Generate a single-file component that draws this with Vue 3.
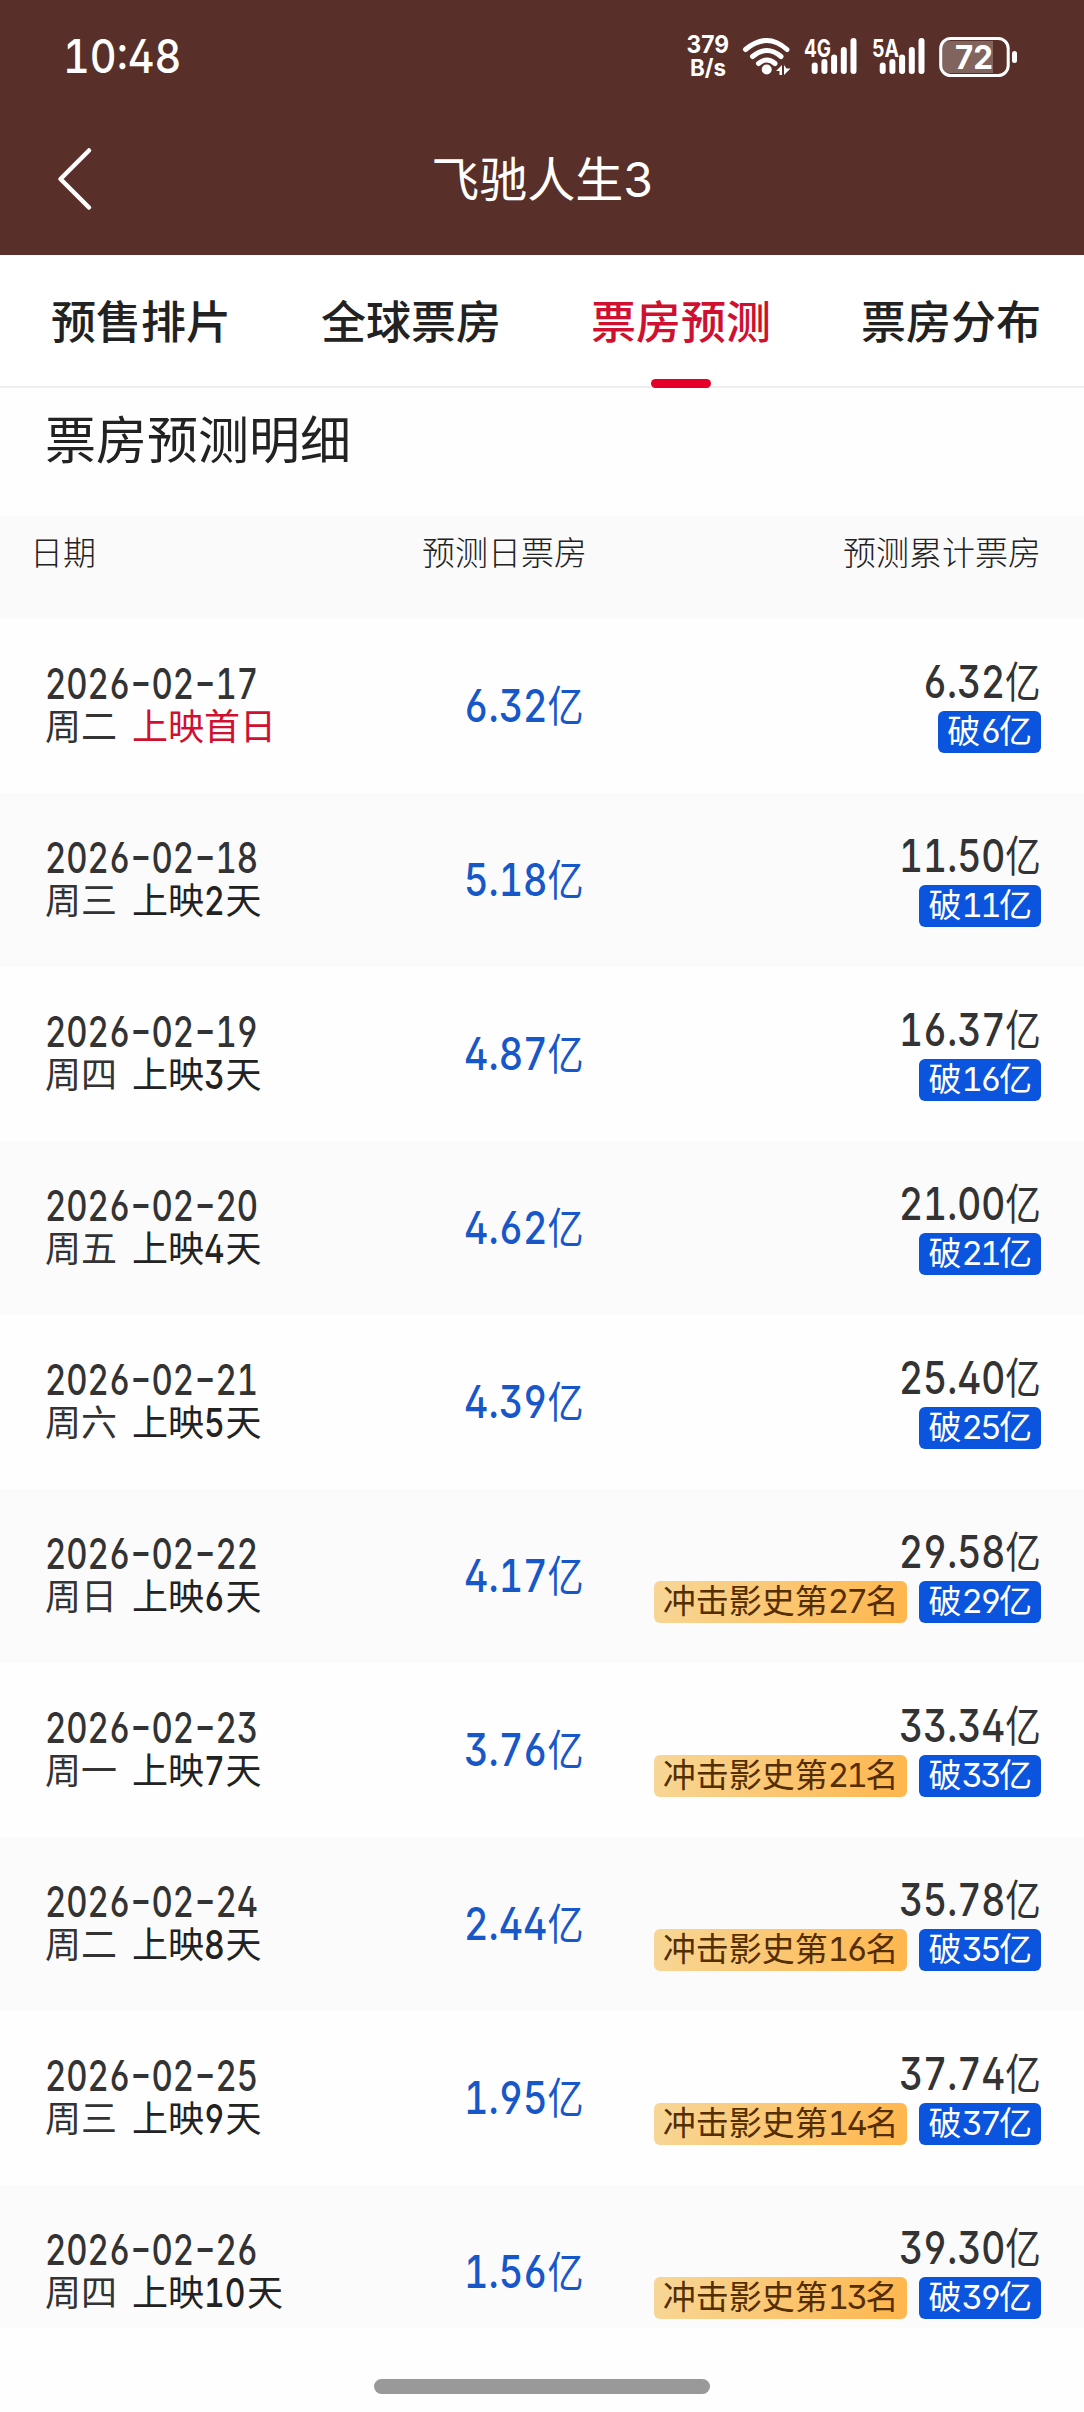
<template>
  <div class="page">
    <header class="top">
      <div class="status">
        <span class="time">10:48</span>
        <svg class="status-icons" width="340" height="50" viewBox="0 0 340 50">
          <g class="status-text">
            <text x="6.500" y="23" font-size="24.500" textLength="42.500" lengthAdjust="spacingAndGlyphs">379</text>
            <text x="10" y="45.500" font-size="23" textLength="36" lengthAdjust="spacingAndGlyphs">B/s</text>
            <text x="124" y="26.5" font-size="24" textLength="27" lengthAdjust="spacingAndGlyphs">4G</text>
            <text x="192" y="26.5" font-size="24" textLength="27" lengthAdjust="spacingAndGlyphs">5A</text>
          </g>
          <!-- wifi -->
          <g fill="none" stroke="#fff" stroke-width="5" stroke-linecap="round">
            <path d="M65.500 19.500Q87 1.500 107 19.500" />
            <path d="M72.500 26.500Q87 14.500 101 26.500" />
            <path d="M78.500 33.500Q87 26.500 95 33.500" />
          </g>
          <circle cx="86.700" cy="39.500" r="5" fill="#fff" />
          <path d="M96 41l6-6v10h-2.500v-4zM104 35v10l6.500-6.500h-4z" fill="#fff" />
          <g stroke="#fff" stroke-width="6" stroke-linecap="round">
            <path
              v-for="(bar, i) in signalBars"
              :key="i"
              :d="`M${bar.x} ${bar.y}V41M${bar.x + 68} ${bar.y}V41`"
            />
          </g>
          <!-- battery -->
          <path d="M313 11V43H270Q262 43 262 35V19Q262 11 270 11Z" fill="#82645f" />
          <rect x="260.700" y="8.500" width="67.500" height="37" rx="10" fill="none" stroke="#fff" stroke-width="3" />
          <rect x="332" y="21" width="5" height="12" rx="2.500" fill="#fff" />
          <text class="battery" x="275" y="39" textLength="38" lengthAdjust="spacingAndGlyphs">72</text>
        </svg>
      </div>
      <div class="nav">
        <svg class="back" width="40" height="66" viewBox="0 0 40 66">
          <path d="M34 4.500L5.500 33L34 61.500" fill="none" stroke="#fff" stroke-width="4.500" stroke-linecap="round" stroke-linejoin="round" />
        </svg>
        <h1>飞驰人生3</h1>
      </div>
    </header>

    <nav class="tabs">
      <div
        v-for="tab in tabs"
        :key="tab"
        class="tab"
        :class="{ active: tab === activeTab }"
        @click="activeTab = tab"
      >
        {{ tab }}
      </div>
    </nav>

    <main class="content">
      <h2>票房预测明细</h2>
      <div class="grid head">
        <span>日期</span>
        <span class="head-daily">预测日票房</span>
        <span class="head-total">预测累计票房</span>
      </div>
      <div v-for="(row, index) in rows" :key="row.date" class="grid row">
        <div class="day">
          <div class="date">
            <span v-for="(char, i) in row.date" :key="i" :class="{ dash: char === '-' }">{{ char }}</span>
          </div>
          <div class="week">
            <span>{{ row.week }}</span>
            <span v-if="index === 0" class="first">上映首日</span>
            <span v-else class="nth"
              >上映<span class="nth-num" :style="{ width: dayWidth(index + 1) }"><b>{{ index + 1 }}</b></span>天</span
            >
          </div>
        </div>
        <div class="daily">
          <div class="amount">{{ row.daily }}<i>亿</i></div>
        </div>
        <div class="total">
          <div class="amount">{{ row.total }}<i>亿</i></div>
          <div class="badges">
            <span v-if="row.rank" class="badge rank">冲击影史第<em>{{ row.rank }}</em>名</span>
            <span class="badge pass">破<em>{{ parseInt(row.total) }}</em>亿</span>
          </div>
        </div>
      </div>
    </main>

    <div class="home"><span></span></div>
  </div>
</template>

<script setup>
import { ref } from "vue";

const tabs = ["预售排片", "全球票房", "票房预测", "票房分布"];
const activeTab = ref("票房预测");

const signalBars = [
  { x: 134.7, y: 35.5 },
  { x: 144.4, y: 32 },
  { x: 154.1, y: 27.5 },
  { x: 163.8, y: 20 },
  { x: 173.5, y: 11 },
];

const rows = [
  { date: "2026-02-17", week: "周二", daily: "6.32", total: "6.32" },
  { date: "2026-02-18", week: "周三", daily: "5.18", total: "11.50" },
  { date: "2026-02-19", week: "周四", daily: "4.87", total: "16.37" },
  { date: "2026-02-20", week: "周五", daily: "4.62", total: "21.00" },
  { date: "2026-02-21", week: "周六", daily: "4.39", total: "25.40" },
  { date: "2026-02-22", week: "周日", daily: "4.17", total: "29.58", rank: 27 },
  { date: "2026-02-23", week: "周一", daily: "3.76", total: "33.34", rank: 21 },
  { date: "2026-02-24", week: "周二", daily: "2.44", total: "35.78", rank: 16 },
  { date: "2026-02-25", week: "周三", daily: "1.95", total: "37.74", rank: 14 },
  { date: "2026-02-26", week: "周四", daily: "1.56", total: "39.30", rank: 13 },
];

// condensed digits take 21.5px each
const dayWidth = (day) => `${String(day).length * 21.5}px`;
</script>

<style>
body {
  background: #fff;
}
</style>

<style scoped>
.page {
  width: 1084px;
  height: 2412px;
  display: flex;
  flex-direction: column;
  overflow: hidden;
  background: #fefefe;
  color: #333;
  font-family: Inter, "Noto Sans CJK SC", sans-serif;
}

.top {
  height: 255px;
  flex: none;
  background: #582f29;
  color: #fff;
}

.status {
  height: 112px;
  display: flex;
  justify-content: space-between;
  box-sizing: border-box;
  padding: 30px 64px 0 63px;
}

.time {
  font-size: 46px;
  font-weight: 500;
  line-height: 52px;
  transform: scaleX(0.9);
  transform-origin: left;
  font-feature-settings: "tnum", "cv02";
}

.status-text,
.battery {
  fill: #fff;
  font-weight: 700;
}

.battery {
  font-size: 33px;
}

.nav {
  display: grid;
  grid-template-columns: 95px 1fr 95px;
  align-items: center;
  height: 134px;
}

.back {
  margin-left: 55px;
}

h1 {
  margin: 0;
  padding-top: 2px;
  text-align: center;
  font-size: 48px;
  font-weight: 400;
  line-height: 60px;
}

.tabs {
  display: flex;
  flex: none;
  height: 133px;
  box-sizing: border-box;
  padding-left: 6px;
  border-bottom: 2px solid #eee;
  background: #fff;
}

.tab {
  width: 270px;
  flex: none;
  display: flex;
  flex-direction: column;
  align-items: center;
  padding-top: 35px;
  box-sizing: border-box;
  height: 133px;
  color: #222;
  font-size: 45px;
  font-weight: 500;
  line-height: 66px;
}

.tab.active {
  color: #d01030;
}

.tab.active::after {
  content: "";
  width: 60px;
  height: 9px;
  margin-top: 23px;
  border-radius: 4.5px;
  background: #e60029;
}

.content {
  height: 1940px;
  flex: none;
  overflow: hidden;
}

h2 {
  margin: 0;
  height: 128px;
  padding: 18px 0 0 45px;
  box-sizing: border-box;
  color: #222;
  font-size: 51px;
  font-weight: 400;
  line-height: 70px;
}

.grid {
  display: grid;
  grid-template-columns: 415px 175px 1fr;
}

.head {
  height: 103px;
  padding: 13px 43px 0 30px;
  box-sizing: border-box;
  background: #fafafa;
  color: #222;
  font-size: 33px;
  font-weight: 300;
  line-height: 48px;
}

.head-daily {
  margin-left: -23px;
  white-space: nowrap;
}

.head-total {
  text-align: right;
}

.row {
  height: 174px;
  padding: 0 43px 0 45px;
  box-sizing: border-box;
}

.row:nth-child(even) {
  background: #fbfbfb;
}

.day {
  padding-top: 40px;
}

.date,
.amount,
.nth-num,
.badge em {
  font-feature-settings: "tnum", "cv02", "cv03", "cv04", "cv09", "case";
}

.date {
  display: flex;
  font-size: 42px;
  font-weight: 450;
  line-height: 50px;
  transform: scaleX(0.783);
  transform-origin: left;
}

.dash {
  transform: scaleX(1.4);
}

.week {
  display: flex;
  gap: 15px;
  font-size: 36px;
  line-height: 36px;
  white-space: nowrap;
}

.first {
  color: #d01030;
}

.nth {
  display: flex;
  color: #222;
}

.nth-num b {
  display: block;
  font-size: 40px;
  font-weight: 500;
  transform: scaleX(0.8);
  transform-origin: left;
}

.amount {
  font-size: 45px;
  font-weight: 450;
  line-height: 50px;
  white-space: nowrap;
  transform: scaleX(0.825);
  transform-origin: right;
}

.amount i {
  font-style: normal;
  font-size: 43px;
  font-weight: 400;
}

.daily {
  display: flex;
  justify-content: flex-end;
  padding: 62px 51px 0 0;
  color: #1757c8;
}

.daily .amount {
  transform: scaleX(0.838);
}

.total {
  display: flex;
  flex-direction: column;
  align-items: flex-end;
  padding-top: 38px;
}

.badges {
  display: flex;
  gap: 12px;
  margin-top: 4px;
}

.badge {
  height: 42px;
  padding: 0 9px;
  border-radius: 6px;
  font-size: 33px;
  line-height: 40px;
  white-space: nowrap;
}

.badge em {
  font-style: normal;
  letter-spacing: -2.6px;
}

.rank {
  background: linear-gradient(105deg, #f7d797, #ffb64c);
  color: #552e00;
}

.pass {
  background: #0b55de;
  color: #fff;
}

.home {
  flex: 1;
  display: flex;
  justify-content: center;
  background: #fefefe;
}

.home span {
  width: 336px;
  height: 15px;
  margin-top: 51px;
  border-radius: 8px;
  background: #999;
}
</style>
